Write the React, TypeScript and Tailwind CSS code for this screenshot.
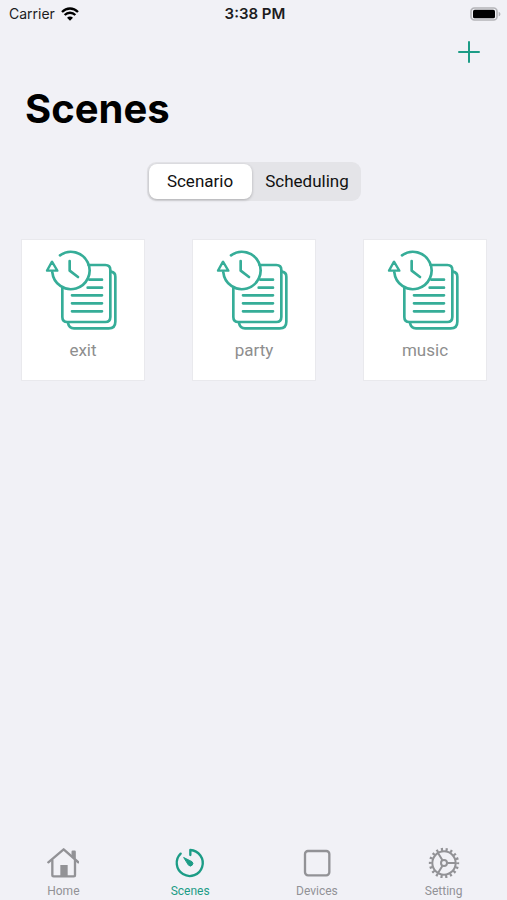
import { useState } from 'react';

const scenes = ['exit', 'party', 'music'];

const segments = ['Scenario', 'Scheduling'];

function WifiIcon() {
  return (
    <svg className="w-[18px] h-[14px]" viewBox="0 0 54 42" fill="none" stroke="#000" strokeWidth="7">
      <path d="M3 15C17 1 37 1 51 15" />
      <path d="M11 24C20 15 34 15 43 24" />
      <path d="M27 41L18 32C23 27 31 27 36 32Z" fill="#000" stroke="none" />
    </svg>
  );
}

function BatteryIcon() {
  return (
    <svg className="w-[31px] h-[14px]" viewBox="0 0 93 42" fill="none">
      <rect x="3" y="3" width="78" height="36" rx="10" stroke="#b4b4b8" strokeWidth="5" />
      <rect x="9" y="8" width="66" height="26" rx="5" fill="#000" />
      <path d="M86 14C93 17 93 25 86 28Z" fill="#b4b4b8" />
    </svg>
  );
}

function SceneIcon() {
  return (
    <svg
      className="w-[76px] h-[80px]"
      viewBox="91 54 228 240"
      fill="none"
      stroke="#36ad98"
      strokeWidth="8"
      strokeLinecap="round"
      strokeLinejoin="round"
    >
      {/* pages */}
      <path d="M222 99H272Q287 99 287 114V255Q287 270 272 270H158Q143 270 143 255V168" />
      <path d="M289 119Q302 121 302 134V269Q302 289 282 289H178Q163 289 160 273" />
      <path d="M224 143H262M219 167H262M172 190H262M172 214H262M172 238H262" />
      {/* clock with the rewind arrow */}
      <path d="M136 70A56 56 0 1 1 113 121" />
      <path d="M112 89L97 116H128Z" strokeWidth="7" />
      <path d="M165 87V116L190 135" />
    </svg>
  );
}

function HomeIcon() {
  return (
    <svg className="size-8" viewBox="0 0 96 96" fill="none" stroke="currentColor" strokeWidth="7" strokeLinecap="round" strokeLinejoin="round">
      <path d="M4 46L50 7L94 46" />
      <path d="M16 40V84Q16 88 20 88H80Q84 88 84 84V40" />
      <path d="M77 27V14H83V33" />
      <path d="M40 88V54H62V88Z" fill="currentColor" stroke="none" />
    </svg>
  );
}

function TimerIcon() {
  return (
    <svg className="size-8" viewBox="0 0 96 96" fill="none" stroke="currentColor" strokeWidth="7" strokeLinecap="round" strokeLinejoin="round">
      <path d="M20 20A39 39 0 1 0 49 9V24" />
      <path d="M30 32L54 44A7 7 0 0 1 44 55Z" fill="currentColor" strokeWidth="3" />
    </svg>
  );
}

function DevicesIcon() {
  return (
    <svg className="size-8" viewBox="0 0 96 96" fill="none" stroke="currentColor" strokeWidth="7">
      <rect x="12" y="12" width="73" height="73" rx="9" />
    </svg>
  );
}

function GearIcon() {
  return (
    <svg className="size-8" viewBox="0 0 96 96" fill="none" stroke="currentColor" strokeWidth="6">
      <circle cx="48" cy="48" r="35" />
      <circle cx="48" cy="48" r="41" strokeWidth="9" pathLength="180" strokeDasharray="4.5 5.5" strokeDashoffset="2.25" />
      <circle cx="48" cy="48" r="9" strokeWidth="6" />
      <path d="M58 48H83M43 39L30 18M43 57L30 78" />
    </svg>
  );
}

const tabs = [
  { label: 'Home', icon: HomeIcon },
  { label: 'Scenes', icon: TimerIcon },
  { label: 'Devices', icon: DevicesIcon },
  { label: 'Setting', icon: GearIcon },
];

export default function App() {
  const [segment, setSegment] = useState('Scenario');
  const activeTab = 'Scenes';

  return (
    <div className="min-h-screen flex flex-col bg-[#f1f1f6] font-['Roboto',sans-serif]">
      <div className="grid grid-cols-3 items-center h-7 pl-[9px] pr-[6px] font-['Inter',sans-serif] text-sm text-[#1c1c1e]">
        <div className="flex items-center gap-1.5">
          <span>Carrier</span>
          <WifiIcon />
        </div>
        <span className="text-center text-[15px] leading-5 font-semibold">3:38 PM</span>
        <div className="flex justify-end">
          <BatteryIcon />
        </div>
      </div>

      <header>
        <div className="flex justify-end h-12 items-center pr-[27px]">
          <button type="button" aria-label="Add scene" className="text-[#1c9c86]">
            <svg className="size-[22px]" viewBox="0 0 22 22" fill="none" stroke="currentColor" strokeWidth="2" strokeLinecap="round">
              <path d="M11 1V21M1 11H21" />
            </svg>
          </button>
        </div>
        <h1 className="mt-[9px] px-[25px] font-['Inter',sans-serif] text-[40px] leading-[48px] font-bold text-black">Scenes</h1>
      </header>

      <main className="flex-1">
        <div className="mt-[29px] mx-auto w-fit flex gap-1 rounded-[9px] bg-[#e4e4e8] p-0.5">
          {segments.map((label) => (
            <button
              key={label}
              type="button"
              aria-pressed={segment === label}
              onClick={() => setSegment(label)}
              className={`w-[103px] h-[35px] pb-0.5 rounded-lg text-[17px] leading-5 text-[#111] ${
                segment === label ? 'bg-white shadow-[0_1px_3px_rgba(0,0,0,0.25)]' : ''
              }`}
            >
              {label}
            </button>
          ))}
        </div>

        <div className="mt-[38px] pl-[21px] pr-5 grid grid-cols-3 gap-[47px]">
          {scenes.map((scene) => (
            <button
              key={scene}
              type="button"
              className="flex flex-col items-center h-[142px] pt-[10px] bg-white border border-[#e9e9ed]"
            >
              <SceneIcon />
              <span className="mt-[10px] text-[17px] leading-5 text-[#8e8e8e]">{scene}</span>
            </button>
          ))}
        </div>
      </main>

      <nav className="grid grid-cols-4 pb-px">
        {tabs.map(({ label, icon: Icon }) => (
          <a
            key={label}
            href="#"
            className={`flex flex-col items-center gap-1 text-[12px] leading-4 ${
              label === activeTab ? 'text-[#1c9c86]' : 'text-[#929296]'
            }`}
          >
            <Icon />
            <span>{label}</span>
          </a>
        ))}
      </nav>
    </div>
  );
}
